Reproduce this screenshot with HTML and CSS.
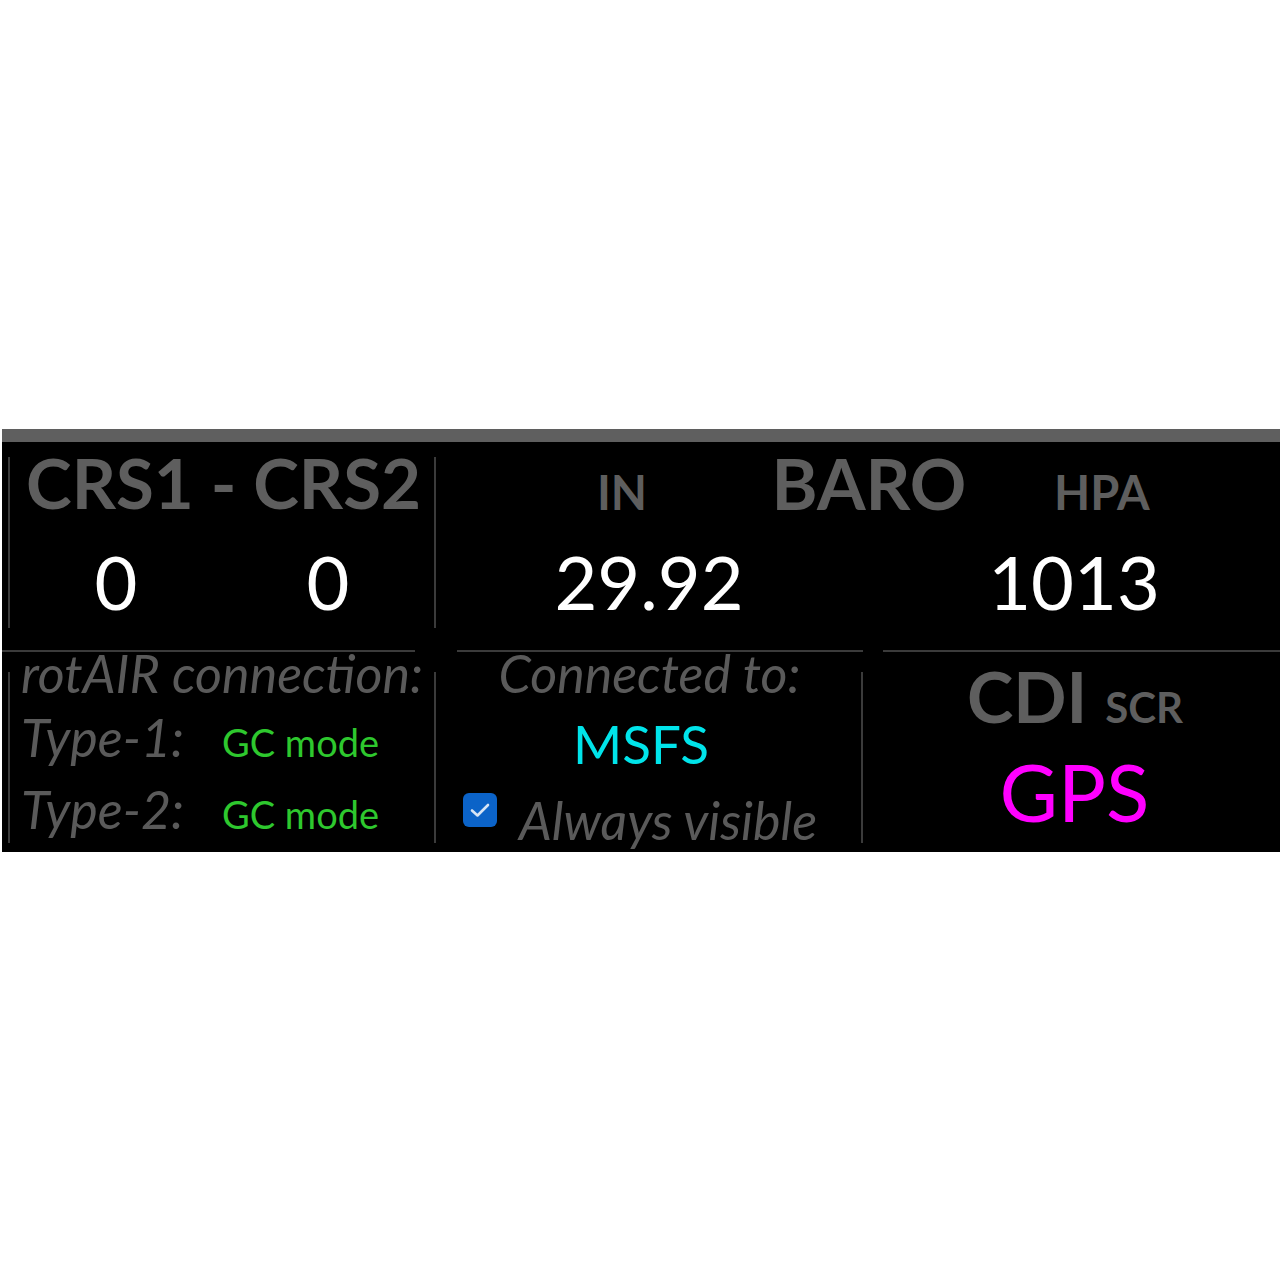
FILE: index.html
```html
<!DOCTYPE html>
<html>
<head>
<meta charset="utf-8">
<title>Panel</title>
<link rel="stylesheet" href="styles.css">
</head>
<body>
<div class="panel">
  <div class="topbar"></div>
  <div class="top">
    <div class="cell-crs">
      <div class="crs-box">
        <div class="crs-title">CRS1 - CRS2</div>
        <div class="crs-values">
          <div class="val">0</div>
          <div class="val">0</div>
        </div>
      </div>
    </div>
    <div class="cell-baro">
      <div class="baro-head">
        <div class="h-in">IN</div>
        <div class="h-baro">BARO</div>
        <div class="h-hpa">HPA</div>
      </div>
      <div class="baro-values">
        <div class="val">29.92</div>
        <div class="val val-hpa">1013</div>
      </div>
    </div>
  </div>
  <div class="divider">
    <div class="seg seg-a"></div>
    <div class="seg seg-b"></div>
    <div class="seg seg-c"></div>
  </div>
  <div class="bottom">
    <div class="cell-rot">
      <div class="rot-box">
        <div class="rot-title">rotAIR connection:</div>
        <div class="rot-row r1"><span class="rot-label">Type-1:</span><span class="mode">GC mode</span></div>
        <div class="rot-row r2"><span class="rot-label">Type-2:</span><span class="mode">GC mode</span></div>
      </div>
    </div>
    <div class="cell-conn">
      <div class="conn-box">
        <div class="conn-title">Connected to:</div>
        <div class="conn-sim">MSFS</div>
        <div class="conn-check">
          <span class="checkbox"><svg width="22" height="18" viewBox="0 0 22 18"><path d="M3 9.5 L8.5 14.5 L19 4" fill="none" stroke="#d6e4f5" stroke-width="2.6" stroke-linecap="round" stroke-linejoin="round"/></svg></span>
          <span class="check-label">Always visible</span>
        </div>
      </div>
    </div>
    <div class="cell-cdi">
      <div class="cdi-head"><span class="cdi">CDI</span><span class="scr">SCR</span></div>
      <div class="gps">GPS</div>
    </div>
  </div>
</div>
</body>
</html>
```

FILE: styles.css
```css
html, body {
  margin: 0;
  padding: 0;
  background: #ffffff;
}

body {
  font-family: Lato, "Open Sans", sans-serif;
}

.panel {
  margin-top: 429px;
  margin-left: 2px;
  width: 1278px;
  height: 423px;
  background: #000000;
  display: flex;
  flex-direction: column;
  overflow: hidden;
}

.topbar {
  height: 13px;
  background: #5f5f5f;
  flex: none;
}

/* ---------- top row ---------- */
.top {
  height: 208px;
  flex: none;
  display: grid;
  grid-template-columns: 434px 1fr;
}

.cell-crs {
  padding-top: 15px;
  padding-left: 6px;
}

.crs-box {
  display: flow-root;
  box-sizing: border-box;
  width: 428px;
  height: 171px;
  border-left: 2px solid #3b3b3b;
  border-right: 2px solid #3b3b3b;
}

.crs-title {
  margin-top: -4px;
  padding-left: 3px;
  font-size: 69px;
  font-weight: 700;
  line-height: 60px;
  color: #5e5e5e;
  text-align: center;
  white-space: nowrap;
}

.crs-values {
  margin-top: 32px;
  display: grid;
  grid-template-columns: 1fr 1fr;
}

.val {
  font-size: 74px;
  line-height: 74px;
  color: #ffffff;
  text-align: center;
  white-space: nowrap;
}

.cell-baro {
  padding-top: 11px;
}

.baro-head {
  height: 69px;
  display: flex;
  align-items: baseline;
  padding-left: 124px;
  color: #5e5e5e;
  font-weight: 700;
  line-height: 60px;
  white-space: nowrap;
}

.h-in {
  width: 124px;
  font-size: 47px;
  text-align: center;
}

.h-baro {
  width: 370px;
  font-size: 70px;
  text-align: center;
}

.h-hpa {
  width: 92px;
  font-size: 47px;
  text-align: center;
}

.baro-values {
  margin-top: 23px;
  display: grid;
  grid-template-columns: 426px 1fr;
}

.val-hpa {
  padding-left: 6px;
}

/* ---------- divider ---------- */
.divider {
  height: 2px;
  flex: none;
  display: flex;
}

.seg {
  height: 2px;
  background: #3b3b3b;
}

.seg-a {
  width: 413px;
}

.seg-b {
  width: 406px;
  margin-left: 42px;
}

.seg-c {
  flex: 1;
  margin-left: 20px;
}

/* ---------- bottom row ---------- */
.bottom {
  height: 200px;
  flex: none;
  display: grid;
  grid-template-columns: 434px 427px 1fr;
}

.cell-rot {
  padding-top: 20px;
  padding-left: 6px;
}

.rot-box {
  display: flow-root;
  box-sizing: border-box;
  width: 428px;
  height: 171px;
  border-left: 2px solid #3b3b3b;
  border-right: 2px solid #3b3b3b;
  padding-left: 11px;
  color: #5a5a5a;
  font-style: italic;
  font-size: 52px;
  white-space: nowrap;
}

.rot-title {
  margin-top: -31px;
  line-height: 64px;
}

.rot-row {
  line-height: 64px;
}

.rot-row.r2 {
  line-height: 80px;
}

.rot-label {
  display: inline-block;
  width: 201px;
}

.mode {
  font-style: normal;
  font-size: 38px;
  line-height: 1;
  color: #2ec82e;
}

.cell-conn {
  padding-top: 20px;
}

.conn-box {
  display: flow-root;
  box-sizing: border-box;
  height: 171px;
  border-right: 2px solid #3b3b3b;
  white-space: nowrap;
}

.conn-title {
  margin-top: -31px;
  font-size: 52px;
  line-height: 64px;
  font-style: italic;
  color: #5a5a5a;
  text-align: center;
  padding-left: 2px;
}

.conn-sim {
  font-size: 53px;
  line-height: 78px;
  color: #00e4ea;
  text-align: center;
  padding-right: 15px;
}

.conn-check {
  display: flex;
  align-items: flex-start;
  padding-left: 27px;
}

.checkbox {
  margin-top: 10px;
  width: 34px;
  height: 34px;
  border-radius: 6px;
  background: #0b63c8;
  display: flex;
  align-items: center;
  justify-content: center;
  flex: none;
}

.check-label {
  margin-top: 5px;
  margin-left: 22px;
  font-size: 52px;
  line-height: 64px;
  font-style: italic;
  color: #5a5a5a;
}

.cell-cdi {
  text-align: center;
  white-space: nowrap;
}

.cdi-head {
  padding-top: 9px;
  padding-left: 7px;
  display: flex;
  justify-content: center;
  align-items: baseline;
  color: #5e5e5e;
  font-weight: 700;
}

.cdi {
  font-size: 70px;
  line-height: 70px;
}

.scr {
  font-size: 42px;
  line-height: 42px;
  margin-left: 18px;
}

.gps {
  font-size: 80px;
  line-height: 120px;
  color: #ff00ff;
  padding-left: 6px;
}
```
